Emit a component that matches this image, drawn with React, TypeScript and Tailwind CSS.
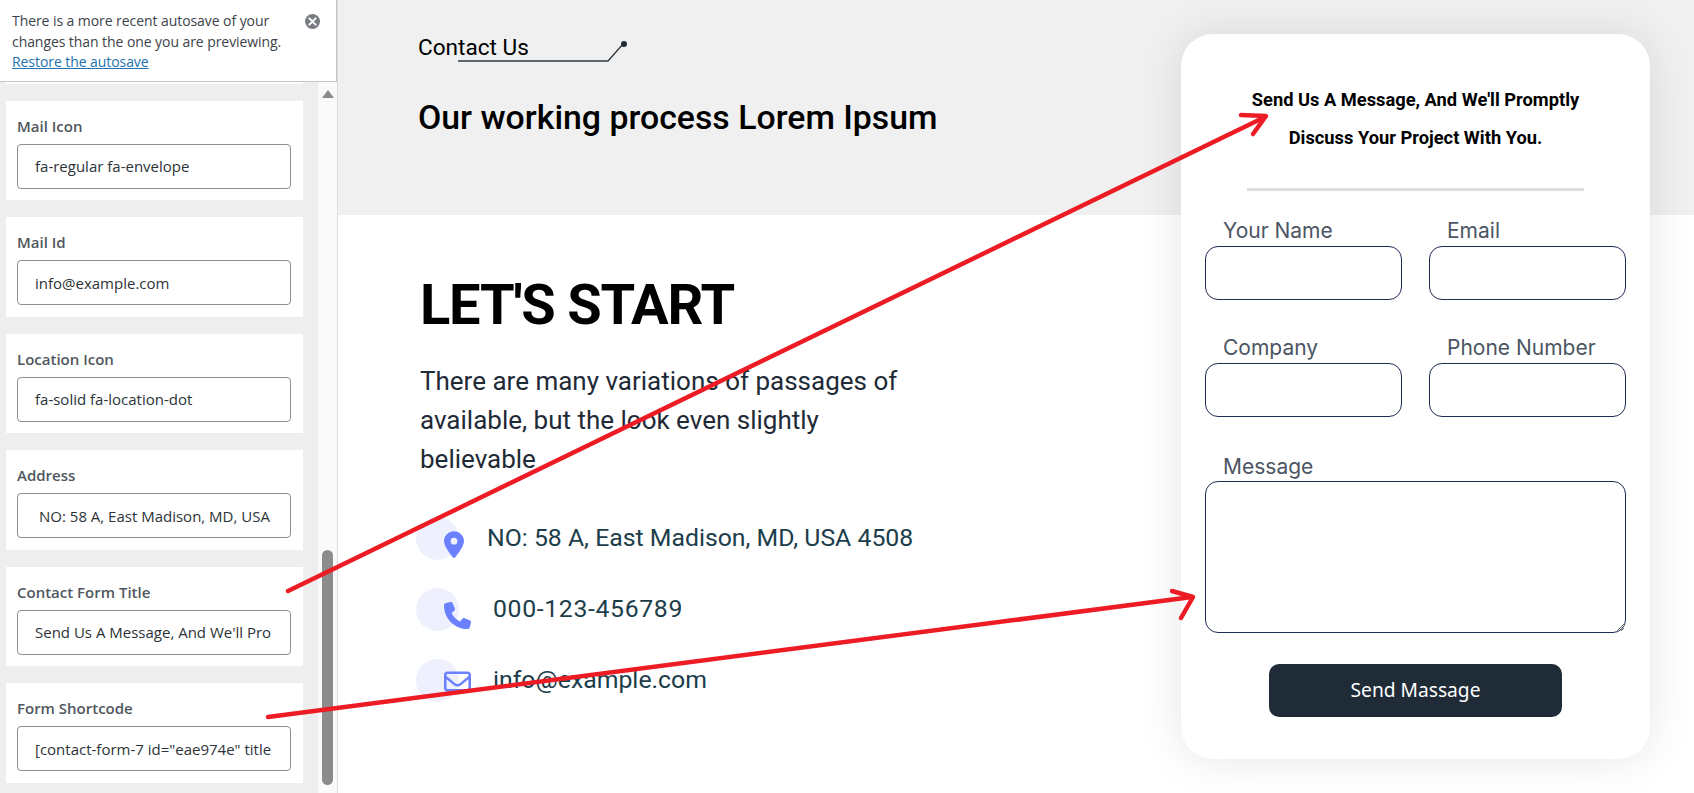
import { FaLocationDot, FaPhone, FaRegEnvelope } from 'react-icons/fa6';

const settingsFields = [
  { label: 'Mail Icon', value: 'fa-regular fa-envelope', pad: 'pl-[17px]' },
  { label: 'Mail Id', value: 'info@example.com', pad: 'pl-[17px]' },
  { label: 'Location Icon', value: 'fa-solid fa-location-dot', pad: 'pl-[17px]' },
  { label: 'Address', value: 'NO: 58 A, East Madison, MD, USA', pad: 'pl-[21px]' },
  { label: 'Contact Form Title', value: "Send Us A Message, And We'll Pro", pad: 'pl-[17px]' },
  { label: 'Form Shortcode', value: '[contact-form-7 id="eae974e" title', pad: 'pl-[17px]' },
];

const Sidebar = () => (
  <aside className="flex h-full w-[338px] shrink-0 flex-col border-r border-[#dcdcde] bg-[#eeeeee] font-['Open_Sans',sans-serif]">
    <div className="relative h-[82px] shrink-0 border-b border-r border-[#c3c4c7] bg-white pl-3 pr-5 pt-[11px] text-[14px] leading-[20.5px] tracking-[-0.07px] text-[#3c434a]">
      <p>There is a more recent autosave of your changes than the one you are previewing.</p>
      <a href="#" className="text-[#2271b1] underline">Restore the autosave</a>
      <span className="absolute right-[16px] top-[14px] flex h-[15px] w-[15px] items-center justify-center rounded-full bg-[#787c82]">
        <svg viewBox="0 0 10 10" className="h-[9px] w-[9px]">
          <path d="M1.5 1.5l7 7M8.5 1.5l-7 7" stroke="#fff" strokeWidth="2.2" strokeLinecap="round" />
        </svg>
      </span>
    </div>
    <div className="flex min-h-0 flex-1">
      <div className="flex-1 overflow-hidden pl-1.5 pr-[15px]">
        <div className="mb-[17px] h-[1.5px] bg-white" />
        {settingsFields.map(field => (
          <div key={field.label} className="mb-[17px] h-[99.5px] bg-white px-[11px] pt-[15px]">
            <label className="block text-[15px] font-semibold leading-[20px] text-[#50575e]">{field.label}</label>
            <input
              readOnly
              defaultValue={field.value}
              className={`mt-2 h-[45px] w-[274px] rounded border border-[#8c8f94] bg-white ${field.pad} pr-2 text-[15px] text-[#2c3338] outline-none`}
            />
          </div>
        ))}
      </div>
      <div className="flex w-[19px] shrink-0 flex-col items-center bg-[#fafafa]">
        <svg viewBox="0 0 12 8" className="mt-2 h-2 w-3">
          <path d="M6 0l6 8H0z" fill="#8a8a8a" />
        </svg>
        <div className="mt-[452px] h-[235px] w-[11px] rounded-full bg-[#8c8c8c]" />
      </div>
    </div>
  </aside>
);

const contactRows = [
  { text: 'NO: 58 A, East Madison, MD, USA 4508', icon: <FaLocationDot className="h-[27px] w-[20px]" />, top: 'top-[14px]', gap: 'ml-[28px] text-[24.8px]' },
  { text: '000-123-456789', icon: <FaPhone className="h-[27px] w-[27px]" />, top: 'top-[14px]', gap: 'ml-[34px] text-[24.8px] tracking-[0.65px]' },
  { text: 'info@example.com', icon: <FaRegEnvelope className="h-[27px] w-[27px]" />, top: 'top-[9px]', gap: 'ml-[34px] text-[24.8px]' },
];

const ContactInfo = () => (
  <div className="ml-[-4px] mt-[38px] flex flex-col gap-7 font-['Roboto',sans-serif]">
    {contactRows.map(row => (
      <div key={row.text} className="flex items-center">
        <span className="relative h-[43px] w-[43px] shrink-0 rounded-full bg-[#eef1fd] text-[#6b80ff]">
          <span className={`absolute left-[28px] ${row.top}`}>{row.icon}</span>
        </span>
        <span className={`${row.gap} -mt-[1px] leading-[30px] text-[#1c3d4a]`}>{row.text}</span>
      </div>
    ))}
  </div>
);

const FormField = ({ label }: { label: string }) => (
  <div>
    <label className="block pl-[18px] font-['Inter',sans-serif] text-[21px] leading-[32px] text-[#4b5563]">{label}</label>
    <input className="-mt-[1px] block h-[54px] w-[197px] rounded-[13px] border border-[#1e2a52] bg-white outline-none" />
  </div>
);

const ContactForm = () => (
  <div className="absolute left-[843px] top-[34px] flex h-[725px] w-[469px] flex-col items-center rounded-[32px] bg-white pt-[47px] shadow-[0_0_45px_rgba(0,0,0,0.1)]">
    <h3 className="w-[370px] text-center font-['Roboto',sans-serif] text-[18.3px] font-bold leading-[38px] text-black">
      Send Us A Message, And We'll Promptly Discuss Your Project With You.
    </h3>
    <div className="mt-[31px] h-[3px] w-[337px] bg-[#dddddd]" />
    <div className="mt-[24px] grid w-[421px] grid-cols-[197px_197px] justify-between gap-y-[32px]">
      <FormField label="Your Name" />
      <FormField label="Email" />
      <FormField label="Company" />
      <FormField label="Phone Number" />
    </div>
    <div className="mt-[34px] w-[421px]">
      <label className="block pl-[18px] font-['Inter',sans-serif] text-[21px] leading-[32px] text-[#4b5563]">Message</label>
      <textarea className="-mt-[2px] block h-[152px] w-[421px] rounded-[13px] border border-[#1e2a52] bg-white outline-none" />
    </div>
    <button className="mt-[31px] h-[53px] w-[293px] rounded-[10px] bg-[#1f2b37] font-['Noto_Sans',sans-serif] text-[19.2px] text-white">
      Send Massage
    </button>
  </div>
);

// red annotation arrows drawn on top of the screenshot
const Arrows = () => (
  <svg className="pointer-events-none absolute left-0 top-0 h-[793px] w-[1694px]" viewBox="0 0 1694 793" fill="none">
    <g stroke="#ed1c24" strokeWidth="4.5" strokeLinecap="round" strokeLinejoin="round">
      <path d="M288 591L1265 117" />
      <path d="M1241 115L1266 116L1253 134" />
      <path d="M268 717L1192 597" />
      <path d="M1172 591L1193 597L1181 618" />
    </g>
  </svg>
);

const App = () => {
  return (
    <div className="relative flex h-[793px] w-[1694px] overflow-hidden bg-white">
      <Sidebar />
      <main className="relative flex-1 font-['Roboto',sans-serif]">
        <section className="h-[215px] bg-[#f0f0f0] pl-20 pt-[33px]">
          <div className="relative text-[22.6px] leading-[30px] text-black">
            Contact Us
            <svg className="absolute left-[40px] top-[7px] h-[24px] w-[172px]" viewBox="0 0 172 24" fill="none">
              <path d="M0 21H150L165 4" stroke="#2d3a45" strokeWidth="1.3" />
              <circle cx="166" cy="4" r="3" fill="#1f2b37" />
            </svg>
          </div>
          <h2 className="mt-[35px] text-[33.85px] font-medium leading-[40px] text-black">Our working process Lorem Ipsum</h2>
        </section>
        <section className="pl-[82px] pt-[55px]">
          <h1 className="text-[56px] font-bold leading-[70px] tracking-[-1.2px] text-black">LET'S START</h1>
          <p className="mt-[22px] w-[490px] text-[26px] leading-[39px] text-[#1f2a37]">
            There are many variations of passages of available, but the look even slightly believable
          </p>
          <ContactInfo />
        </section>
        <ContactForm />
      </main>
      <Arrows />
    </div>
  );
};

export default App;
